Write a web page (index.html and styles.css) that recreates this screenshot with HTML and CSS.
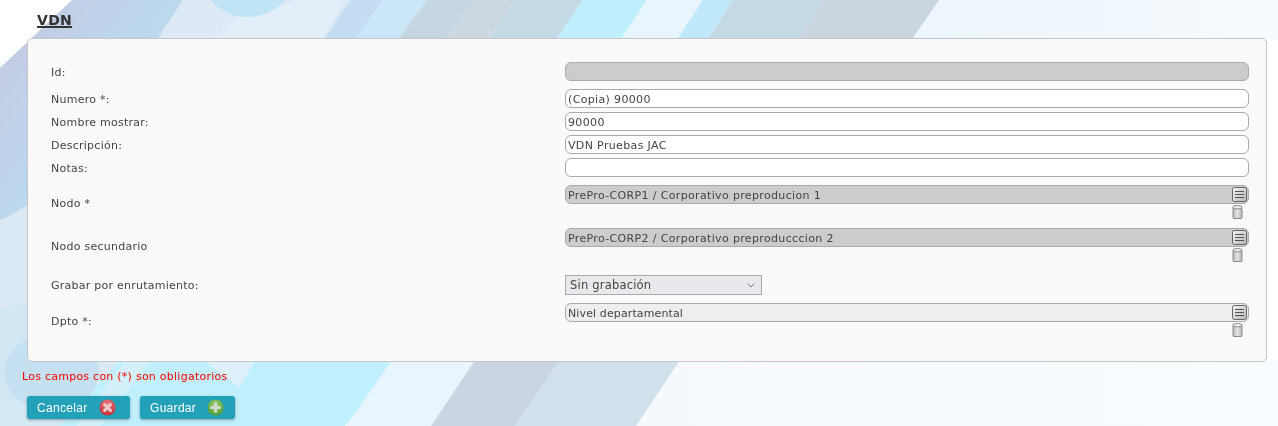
FILE: index.html
```html
<!DOCTYPE html>
<html lang="es">
<head>
<meta charset="utf-8">
<title>VDN</title>
<link rel="stylesheet" href="styles.css">
</head>
<body>
<svg class="backdrop" viewBox="0 0 1278 426" preserveAspectRatio="none" aria-hidden="true">
  <defs>
    <linearGradient id="lilac" gradientUnits="userSpaceOnUse" x1="50" y1="0" x2="130" y2="56">
      <stop offset="0" stop-color="#c3cce5"/><stop offset="1" stop-color="#bbd8ed"/>
    </linearGradient>
    <linearGradient id="fade" x1="0" y1="0" x2="1" y2="0">
      <stop offset="0" stop-color="#edf6fc"/><stop offset=".5" stop-color="#eff7fc"/><stop offset="1" stop-color="#f8fbfe"/>
    </linearGradient>
    <linearGradient id="fadeb" x1="0" y1="0" x2="1" y2="0">
      <stop offset="0" stop-color="#f5f9fe"/><stop offset="1" stop-color="#f9fcfe"/>
    </linearGradient>
  </defs>
  <rect width="1278" height="426" fill="#fff"/>
  <polygon points="939,0 1278,0 1278,40 912,40" fill="url(#fade)"/>
  <polygon points="680,360 1278,360 1278,426 636,426" fill="url(#fadeb)"/>
  <polygon points="72,0 350,0 130,426 0,426 0,68" fill="#dbe9f5"/>
  <path d="M72 0H183L90 170Q60 205 27 205Q12 215 0 220V68Z" fill="url(#lilac)"/>
  <polygon points="183,0 350,0 325,38 158,38" fill="#dde9f5"/>
  <polygon points="213,38 240,15 300,0 345,0 322,38" fill="#e4eef8"/>
  <circle cx="248" cy="-33" r="50" fill="#bfe4f6"/>
  <polygon points="350,0 383,0 357,38 325,38" fill="#c5ddf3"/>
  <polygon points="383,0 427,0 399,38 357,38" fill="#c9e7f9"/>
  <polygon points="427,0 475,0 447,38 399,38" fill="#c4d6e2"/>
  <polygon points="475,0 515,0 490,38 447,38" fill="#cdd7e0"/>
  <polygon points="515,0 583,0 557,38 490,38" fill="#c3d9e5"/>
  <polygon points="583,0 647,0 622,38 557,38" fill="#bfeefc"/>
  <polygon points="647,0 703,0 678,38 622,38" fill="#e8f5fc"/>
  <polygon points="703,0 733,0 708,38 678,38" fill="#bfe9fa"/>
  <polygon points="733,0 823,0 800,38 708,38" fill="#c3d9e5"/>
  <polygon points="823,0 939,0 913,38 800,38" fill="#cbd5df"/>
  <circle cx="25" cy="370" r="66" fill="#d2e7f4"/>
  <polygon points="0,400 90,400 130,426 0,426" fill="#d3e9f6"/>
  <polygon points="60,426 120,360 400,360 345,426" fill="#c0effe"/>
  <polygon points="76,426 100,426 150,361 125,361" fill="#d4f0fa"/>
  <polygon points="205,361 255,361 239,387" fill="#def1fa"/>
  <ellipse cx="52" cy="372" rx="47" ry="39" fill="#c5e0f1"/>
  <polygon points="392,360 475,360 431,426 346,426" fill="#e8f5fc"/>
  <polygon points="475,360 561,360 515,426 431,426" fill="#c9d6e2"/>
  <polygon points="561,360 680,360 636,426 515,426" fill="#d2e0eb"/>
</svg>

<main class="page">
  <h1 class="title">VDN</h1>
  <form class="panel">
    <div class="row row-id">
      <label class="label">Id:</label>
      <div class="field"><input class="input input-off" type="text" readonly></div>
    </div>
    <div class="row row-wide">
      <label class="label">Numero *:</label>
      <div class="field"><input class="input" type="text" value="(Copia) 90000"></div>
    </div>
    <div class="row">
      <label class="label">Nombre mostrar:</label>
      <div class="field"><input class="input" type="text" value="90000"></div>
    </div>
    <div class="row">
      <label class="label">Descripción:</label>
      <div class="field"><input class="input" type="text" value="VDN Pruebas JAC"></div>
    </div>
    <div class="row">
      <label class="label">Notas:</label>
      <div class="field"><input class="input" type="text"></div>
    </div>
    <div class="row row-wide">
      <label class="label">Nodo *</label>
      <div class="field">
        <div class="picker">
          <input class="input input-off" type="text" readonly value="PrePro-CORP1 / Corporativo preproducion 1">
          <svg class="list-icon" viewBox="0 0 15 15" aria-hidden="true"><use href="#i-list"/></svg>
        </div>
        <svg class="trash-icon" viewBox="0 0 11 14" aria-hidden="true"><use href="#i-trash"/></svg>
      </div>
    </div>
    <div class="row row-wide">
      <label class="label">Nodo secundario</label>
      <div class="field">
        <div class="picker">
          <input class="input input-off" type="text" readonly value="PrePro-CORP2 / Corporativo preproducccion 2">
          <svg class="list-icon" viewBox="0 0 15 15" aria-hidden="true"><use href="#i-list"/></svg>
        </div>
        <svg class="trash-icon" viewBox="0 0 11 14" aria-hidden="true"><use href="#i-trash"/></svg>
      </div>
    </div>
    <div class="row row-select">
      <label class="label">Grabar por enrutamiento:</label>
      <div class="field">
        <select class="select"><option>Sin grabación</option></select>
      </div>
    </div>
    <div class="row row-dpto">
      <label class="label">Dpto *:</label>
      <div class="field">
        <div class="picker">
          <input class="input input-soft" type="text" readonly value="Nivel departamental">
          <svg class="list-icon" viewBox="0 0 15 15" aria-hidden="true"><use href="#i-list"/></svg>
        </div>
        <svg class="trash-icon" viewBox="0 0 11 14" aria-hidden="true"><use href="#i-trash"/></svg>
      </div>
    </div>
  </form>
  <p class="note">Los campos con (*) son obligatorios</p>
  <div class="actions">
    <button class="btn btn-cancel" type="button">Cancelar
      <svg class="btn-icon" viewBox="0 0 18 18" aria-hidden="true">
        <circle cx="9" cy="9" r="8.5" fill="url(#redball)"/>
        <path d="M5.8 5.8 12.2 12.2M12.2 5.8 5.8 12.2" stroke="#eccccc" stroke-width="3" stroke-linecap="round"/>
      </svg>
    </button>
    <button class="btn btn-save" type="button">Guardar
      <svg class="btn-icon" viewBox="0 0 18 18" aria-hidden="true">
        <circle cx="9" cy="9" r="8.5" fill="url(#greenball)"/>
        <path d="M9 3.6V14.4M3.6 9H14.4" stroke="#d4dcce" stroke-width="3.4"/>
      </svg>
    </button>
  </div>
</main>

<svg class="defs" width="0" height="0" aria-hidden="true">
  <defs>
    <linearGradient id="metal" x1="0" y1="0" x2="1" y2="1">
      <stop offset="0" stop-color="#f6f6f6"/><stop offset="1" stop-color="#b4b4b4"/>
    </linearGradient>
    <linearGradient id="can" x1="0" y1="0" x2="1" y2="0">
      <stop offset="0" stop-color="#b4b8bc"/><stop offset=".5" stop-color="#e2e4e6"/><stop offset="1" stop-color="#b0b4b8"/>
    </linearGradient>
    <radialGradient id="redball" cx=".5" cy=".3" r=".75">
      <stop offset="0" stop-color="#ef7f84"/><stop offset="1" stop-color="#c4252f"/>
    </radialGradient>
    <radialGradient id="greenball" cx=".5" cy=".3" r=".75">
      <stop offset="0" stop-color="#9ad070"/><stop offset="1" stop-color="#4a962e"/>
    </radialGradient>
    <symbol id="i-list" viewBox="0 0 15 15">
      <rect x=".5" y=".5" width="14" height="14" rx="2" fill="url(#metal)" stroke="#666"/>
      <path d="M3 4.5H12M3 7.5H12M3 10.5H12" stroke="#444" stroke-width=".9"/>
    </symbol>
    <symbol id="i-trash" viewBox="0 0 11 14">
      <path d="M1 2.5V12.5Q1 13.5 2 13.5H9Q10 13.5 10 12.5V2.5Z" fill="url(#can)" stroke="#8a8a8a"/>
      <ellipse cx="5.5" cy="2.2" rx="4.6" ry="1.7" fill="#eceef0" stroke="#8a8a8a"/>
    </symbol>
  </defs>
</svg>
</body>
</html>
```

FILE: styles.css
```css
* { box-sizing: border-box; }

html, body { height: 100%; }

body {
  margin: 0;
  overflow: hidden;
  font-family: "DejaVu Sans", Verdana, sans-serif;
  font-size: 11px;
  letter-spacing: .25px;
  color: #444;
  background: #fff;
}

.backdrop {
  position: fixed;
  inset: 0;
  width: 100%;
  height: 100%;
  z-index: -1;
}

.defs { position: absolute; }

.page {
  display: flex;
  flex-direction: column;
  align-items: flex-start;
  padding: 11px 11px 0 27px;
}

.title {
  margin: 0 0 9px 10px;
  height: 18px;
  font-size: 14px;
  line-height: 18px;
  font-weight: 700;
  color: #333;
  letter-spacing: .3px;
  text-decoration: underline;
  text-decoration-thickness: 2px;
}

.panel {
  display: flex;
  flex-direction: column;
  gap: 4px;
  width: 1240px;
  padding: 23px 17px 23px 23px;
  background: #fafafa;
  border: 1px solid #c6c6c6;
  border-radius: 5px;
}

.row {
  display: grid;
  grid-template-columns: 514px 684px;
  align-items: center;
  min-height: 19px;
}

.row-wide { margin-top: 4px; }
.row-select { margin-top: 8px; }
.row-dpto { margin-top: 4px; }

.label { padding-top: 1px; }

.field {
  display: flex;
  flex-direction: column;
  align-items: flex-end;
  gap: 1px;
  width: 684px;
}

.picker {
  position: relative;
  width: 100%;
  height: 19px;
}

.input {
  display: block;
  width: 100%;
  height: 19px;
  padding: 1px 2px 0;
  font: inherit;
  font-size: 11px;
  letter-spacing: .35px;
  color: #444;
  background: #fff;
  border: 1px solid #aaa;
  border-radius: 6px;
  outline: none;
}

.input-off { background: #ccc; }
.input-soft { background: #eee; letter-spacing: .12px; }

.list-icon {
  position: absolute;
  top: 2px;
  right: 2px;
  width: 15px;
  height: 15px;
}

.trash-icon {
  display: block;
  width: 11px;
  height: 14px;
  margin: 0 6px 1px 0;
}

.select {
  display: block;
  align-self: flex-start;
  width: 197px;
  height: 20px;
  padding: 0 0 0 4px;
  font: inherit;
  font-size: 11.5px;
  letter-spacing: .2px;
  color: #444;
  appearance: none;
  background: #e9e9ed url("data:image/svg+xml,%3Csvg xmlns='http://www.w3.org/2000/svg' width='8' height='5'%3E%3Cpath d='M.5.5l3.5 3.5L7.500.5' fill='none' stroke='%23777' stroke-width='1'/%3E%3C/svg%3E") no-repeat right 6px center;
  border: 1px solid #aaa;
  border-radius: 0;
}

.note {
  margin: 8px 0 0 -5px;
  line-height: 14px;
  color: #f00;
}

.actions {
  display: flex;
  gap: 10px;
  margin-top: 12px;
}

.btn {
  display: flex;
  align-items: center;
  justify-content: space-between;
  height: 23px;
  padding: 0 12px 0 10px;
  font-family: "Liberation Sans", Arial, sans-serif;
  font-size: 12px;
  letter-spacing: .3px;
  color: #fff;
  background: #22a1b8;
  border: 0;
  border-radius: 3px;
  box-shadow: 0 1px 3px rgba(0, 0, 0, .35);
}

.btn-cancel { width: 103px; padding-right: 14px; }
.btn-save { width: 95px; padding-right: 11px; }

.btn-icon {
  display: block;
  width: 17px;
  height: 17px;
  flex: none;
}
```
